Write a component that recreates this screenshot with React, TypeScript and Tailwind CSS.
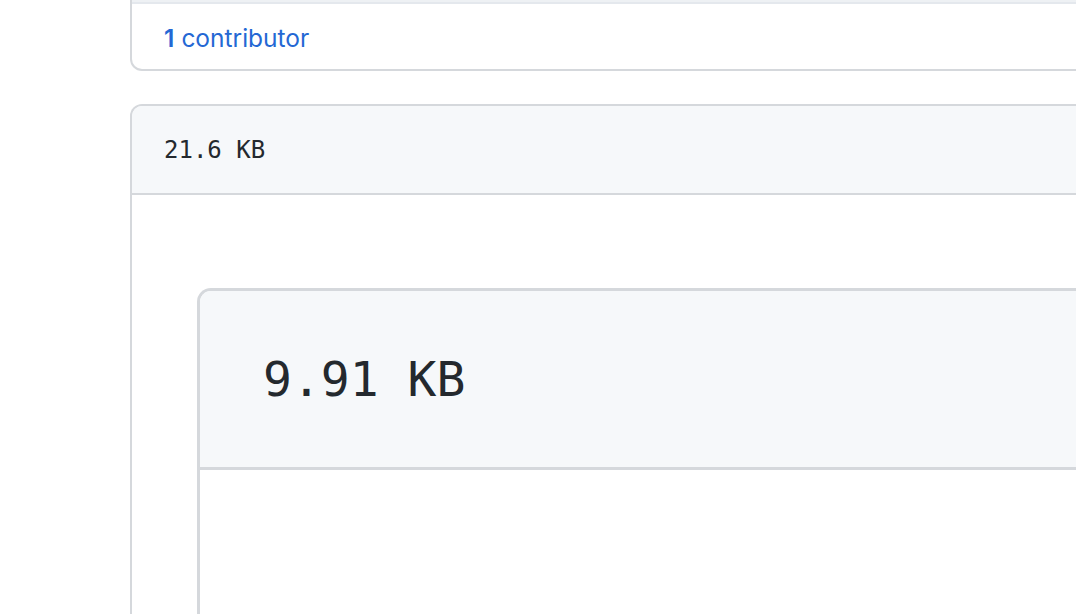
import React from "react";

export default function App() {
  return (
    <div className="w-[1076px] h-[614px] overflow-hidden bg-white">
      <div className="ml-[130px] w-[1000px]">
        {/* top card */}
        <div className="border-[2px] border-t-0 border-[#d5d8dc] rounded-bl-[12px] rounded-br-[12px] overflow-hidden">
          <div className="h-[2px] bg-[#eef1f4]" />
          <div className="h-[2px] bg-[#e4e8ed]" />
          <div className="h-[65px] flex items-center pl-[32px] pt-[3px] text-[24.5px] text-[#2468d4]" style={{ fontFamily: "Inter, 'Liberation Sans', sans-serif" }}>
            <span className="font-semibold">1</span>
            <span className="ml-[7px]">contributor</span>
          </div>
        </div>

        {/* second card */}
        <div className="mt-[33px] border-[2px] border-b-0 border-[#d5d8dc] rounded-tl-[12px] rounded-tr-[12px] h-[520px]">
          <div className="h-[89px] bg-[#f6f8fa] border-b-[2px] border-[#d5d8dc] rounded-tl-[10px] flex items-center pl-[32px] text-[24px] text-[#24292e]" style={{ fontFamily: "'DejaVu Sans Mono', 'Liberation Mono', monospace" }}>
            21.6 KB
          </div>
          <div className="pt-[93px] pl-[65px]">
            <div className="border-[3px] border-r-0 border-b-0 border-[#d5d8dc] rounded-tl-[14px] h-[400px]">
              <div className="h-[179px] bg-[#f6f8fa] border-b-[3px] border-[#d5d8dc] rounded-tl-[11px] flex items-center pl-[63px] text-[48px] text-[#24292e]" style={{ fontFamily: "'DejaVu Sans Mono', 'Liberation Mono', monospace" }}>
                9.91 KB
              </div>
            </div>
          </div>
        </div>
      </div>
    </div>
  );
}
